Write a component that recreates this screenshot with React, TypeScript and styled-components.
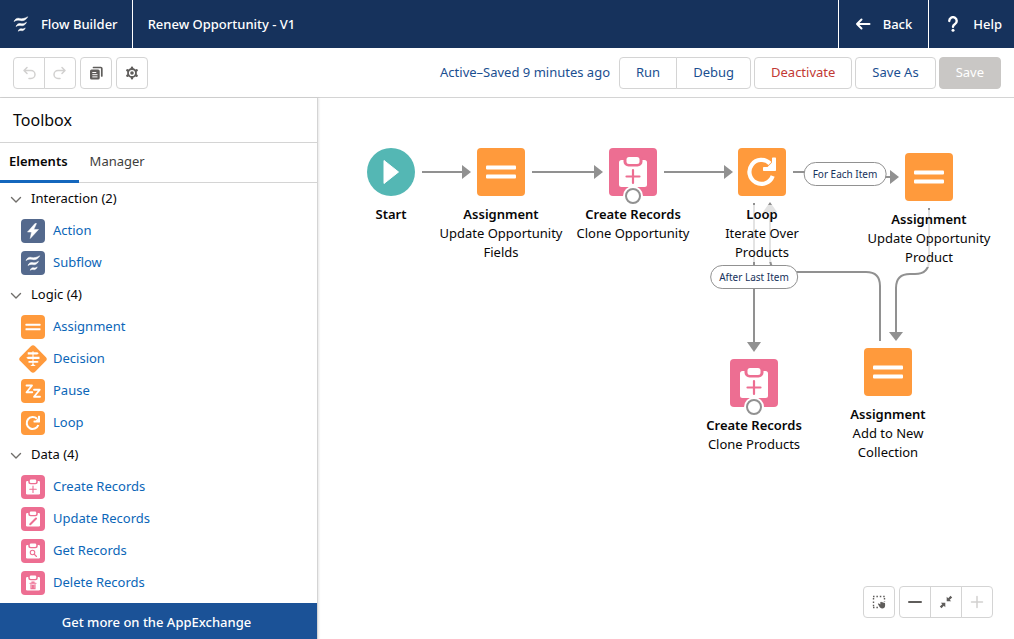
import React from "react";
import styled, { createGlobalStyle, css } from "styled-components";

const GlobalStyle = createGlobalStyle`
  *, *::before, *::after { box-sizing: border-box; }
  body {
    margin: 0;
    background: #fff;
    color: #080707;
    font-family: "Noto Sans", "Open Sans", sans-serif;
    font-size: 13px;
    line-height: 19px;
  }
  button { font: inherit; cursor: pointer; }
  a { text-decoration: none; }
  svg { display: block; flex: none; }
`;

const Page = styled.div`
  min-height: 100vh;
  display: flex;
  flex-direction: column;
`;

/* ---------- header ---------- */

const Header = styled.header`
  display: flex;
  height: 48px;
  background: #16325c;
  color: #fff;
  font-weight: 500;
`;

const Brand = styled.div`
  display: flex;
  align-items: center;
  gap: 12px;
  padding: 0 14px 0 13px;
  border-right: 1px solid #fff;
`;

const FlowTitle = styled.h1`
  flex: 1;
  margin: 0;
  padding-left: 15px;
  font-size: 13px;
  font-weight: 500;
  line-height: 48px;
`;

const HeaderLink = styled.a`
  display: flex;
  align-items: center;
  gap: 12px;
  padding: 0 16px;
  border-left: 1px solid #fff;
  color: #fff;

  &:last-child { padding-right: 12px; }
`;

/* ---------- toolbar ---------- */

const Toolbar = styled.div`
  display: flex;
  align-items: center;
  justify-content: space-between;
  height: 50px;
  padding: 0 13px;
  border-bottom: 1px solid #d4d4d4;
`;

const ToolbarSide = styled.div<{ $gap: number }>`
  display: flex;
  align-items: center;
  gap: ${(p) => p.$gap}px;
`;

const SaveStatus = styled.span`
  margin-right: 6px;
  color: #1b4f91;
`;

const ButtonGroup = styled.div`
  display: flex;

  & > button + button { margin-left: -1px; }
  & > button:not(:first-child) { border-top-left-radius: 0; border-bottom-left-radius: 0; }
  & > button:not(:last-child) { border-top-right-radius: 0; border-bottom-right-radius: 0; }
`;

const buttonBase = css`
  height: 32px;
  border: 1px solid #d4d4d4;
  border-radius: 4px;
  background: #fff;
`;

const IconButton = styled.button`
  ${buttonBase}
  display: grid;
  place-items: center;
  width: 32px;
  padding: 0;
  color: #5f5d5b;

  &:disabled { color: #d2d1d0; cursor: default; }
`;

const TextButton = styled.button<{ $tone?: "danger" }>`
  ${buttonBase}
  padding: 0 16px;
  color: ${(p) => (p.$tone === "danger" ? "#c23934" : "#1b4f91")};

  &:disabled {
    border-color: #c9c7c5;
    background: #c9c7c5;
    color: #fff;
    cursor: default;
  }
`;

/* ---------- sidebar ---------- */

const Body = styled.div`
  flex: 1;
  display: flex;
`;

const Sidebar = styled.aside`
  flex: none;
  display: flex;
  flex-direction: column;
  width: 318px;
  border-right: 1px solid #d4d4d4;
  box-shadow: 1px 0 2px rgba(0, 0, 0, 0.1);
`;

const SidebarTitle = styled.h2`
  margin: 0;
  padding: 0 13px;
  border-bottom: 1px solid #d4d4d4;
  font-size: 16px;
  font-weight: 400;
  line-height: 44px;
`;

const Tabs = styled.div`
  display: flex;
  gap: 2px;
  height: 40px;
  border-bottom: 1px solid #d4d4d4;
`;

const Tab = styled.button<{ $active?: boolean }>`
  height: 40px;
  padding: 0 11px 0 9px;
  border: 0;
  border-bottom: 3px solid ${(p) => (p.$active ? "#1467bd" : "transparent")};
  background: none;
  color: ${(p) => (p.$active ? "#080707" : "#3e3e3c")};
  font-weight: ${(p) => (p.$active ? 600 : 400)};
`;

const Tree = styled.nav`
  flex: 1;
  padding-bottom: 4px;
`;

const TreeText = styled.span`
  padding-bottom: 2px;
`;

const GroupButton = styled.button`
  display: flex;
  align-items: center;
  gap: 9px;
  width: 100%;
  height: 32px;
  padding: 0 10px;
  border: 0;
  background: none;
  color: #080707;
`;

const ItemList = styled.ul`
  margin: 0;
  padding: 0;
  list-style: none;
`;

const ItemLink = styled.a`
  display: flex;
  align-items: center;
  gap: 8px;
  height: 32px;
  padding-left: 21px;
  color: #0b66b8;
`;

const ExchangeButton = styled.a`
  display: block;
  background: #1b5297;
  color: #fff;
  font-weight: 500;
  line-height: 36px;
  padding: 1px 4px 0 0;
  text-align: center;
`;

/* ---------- canvas ---------- */

const Canvas = styled.main`
  position: relative;
  flex: 1;
  overflow: hidden;
`;

const Wires = styled.svg`
  position: absolute;
  inset: 0;
  width: 100%;
  height: 100%;
`;

const Node = styled.div<{ $x: number; $y: number }>`
  position: absolute;
  left: ${(p) => p.$x}px;
  top: ${(p) => p.$y}px;
  display: flex;
  flex-direction: column;
  align-items: center;
  gap: 9px;
  width: 126px;
  transform: translateX(-50%);
`;

const NodeIcon = styled.div`
  position: relative;
`;

const Port = styled.span`
  position: absolute;
  left: 14px;
  bottom: -10px;
  width: 20px;
  height: 20px;
  border: 2px solid #fff;
  border-radius: 50%;
  background: #fff;

  &::after {
    content: "";
    display: block;
    width: 16px;
    height: 16px;
    border: 2px solid #919191;
    border-radius: 50%;
  }
`;

const NodeText = styled.div`
  background: rgba(255, 255, 255, 0.75);
  text-align: center;
`;

const NodeType = styled.div`
  font-weight: 600;
`;

const Pill = styled.span<{ $x: number; $y: number }>`
  position: absolute;
  left: ${(p) => p.$x}px;
  top: ${(p) => p.$y}px;
  padding: 0 8px;
  border: 1px solid #919191;
  border-radius: 12px;
  background: #fff;
  color: #16325c;
  font-size: 10px;
  line-height: 22px;
  white-space: nowrap;
  transform: translate(-50%, -50%);
`;

const ZoomBar = styled.div`
  position: absolute;
  right: 21px;
  bottom: 22px;
  display: flex;
  gap: 4px;
`;

/* ---------- drawings ---------- */

type Kind =
  | "start" | "action" | "subflow" | "assignment" | "decision"
  | "pause" | "loop" | "create" | "update" | "get" | "delete";

const fills: Record<Kind, string> = {
  start: "#54b7b4",
  action: "#54698d",
  subflow: "#54698d",
  assignment: "#ff9a3c",
  decision: "#ff9a3c",
  pause: "#ff9a3c",
  loop: "#ff9a3c",
  create: "#ed6e92",
  update: "#ed6e92",
  get: "#ed6e92",
  delete: "#ed6e92",
};

const Waves = () => (
  <g fill="currentColor" stroke="currentColor" strokeWidth="1" strokeLinejoin="round">
    <path d="M10 19c2-5 6-7.500 11-6.200 5 1.300 9 .6 16.500-3.300-2.500 5.500-8 9-14.500 7.500-5-1.200-8.500-.8-13 2z" />
    <path d="M14 29c1.500-4.500 5-6.800 9-5.800 4 1 7 .3 12-2.700-2 5-6.500 7.800-11.500 6.700-3.700-.8-6.300-.4-9.500 1.800z" />
    <path d="M18.500 38.500c1-4 3.500-5.700 6.500-5 2.500.6 4.500.2 7.500-1.700-1.500 4.200-4.500 6.200-8 5.400-2.300-.5-4-.2-6 1.300z" />
  </g>
);

const Clipboard = ({ color, children }: { color: string; children: React.ReactNode }) => (
  <>
    <rect x="10" y="12" width="28" height="27" rx="2.500" fill="#fff" />
    <rect x="14.500" y="6.500" width="19" height="12" rx="5" fill={color} />
    <rect x="17.500" y="9" width="13" height="7" rx="2.500" fill="#fff" />
    <g fill="none" stroke={color} strokeWidth="2.200" strokeLinecap="round">{children}</g>
  </>
);

function Glyph({ kind }: { kind: Kind }) {
  const color = fills[kind];
  switch (kind) {
    case "start":
      return <path d="M17 12.500v23L31.500 24z" fill="#fff" stroke="#fff" strokeLinejoin="round" />;
    case "action":
      return <path d="M28 9 13 26h8l-2.500 13L35 21h-9.500L31 9z" fill="#fff" stroke="#fff" strokeLinejoin="round" />;
    case "subflow":
      return <Waves />;
    case "assignment":
      return (
        <g fill="#fff">
          <rect x="9" y="17.500" width="30" height="4" rx="1" />
          <rect x="9" y="26.500" width="30" height="4" rx="1" />
        </g>
      );
    case "decision":
      return (
        <g fill="#fff">
          <rect x="23" y="8.500" width="2" height="26" />
          <path d="M13.500 10.500h19l3 2.200-3 2.200h-19z" />
          <path d="M37 19.500H14l-3.500 2.200 3.500 2.200h23z" />
          <path d="M15 28h18l2.500 1.800L33 31.600H15z" />
          <path d="M18.500 38l5.500-4.500 5.500 4.500z" />
        </g>
      );
    case "pause":
      return (
        <g fill="none" stroke="#fff" strokeWidth="3.600" strokeLinejoin="round" strokeLinecap="round">
          <path d="M11 13h11L11 26.500h11.500" />
          <path d="M26 21.500h11.500L26 35.500h12" />
        </g>
      );
    case "loop":
      return (
        <>
          <path d="M34.700 28A12 12 0 1 1 32 15.500" fill="none" stroke="#fff" strokeWidth="4.200" />
          <path d="M34 10.500c0-.6.500-1 1-1h2c.6 0 1 .4 1 1v11.500c0 .6-.4 1-1 1H26c-.6 0-1-.4-1-1V20c0-.6.400-1 1-1h3.500L34 14.500z" fill="#fff" />
        </>
      );
    case "create":
      return <Clipboard color={color}><path d="M24 22v13M17.500 28.500h13" /></Clipboard>;
    case "update":
      return <Clipboard color={color}><path d="M18.500 34.500 30 23" strokeWidth="4" /></Clipboard>;
    case "get":
      return (
        <Clipboard color={color}>
          <circle cx="23" cy="27" r="4.500" />
          <path d="M26.500 30.500 31 35" />
        </Clipboard>
      );
    case "delete":
      return (
        <Clipboard color={color}>
          <path d="M18 24.500h12M22 24v-2h4v2M20 27v8.500h8V27M22.800 28v6M25.300 28v6" />
        </Clipboard>
      );
  }
}

function ElementIcon({ kind, size }: { kind: Kind; size: number }) {
  const radius = size > 30 ? 4 : 8;
  return (
    <svg width={size} height={size} viewBox="0 0 48 48" color="#fff" overflow="visible" aria-hidden="true">
      {kind === "start" ? (
        <circle cx="24" cy="24" r="24" fill={fills[kind]} />
      ) : kind === "decision" ? (
        <rect x="3" y="3" width="42" height="42" rx="6" fill={fills[kind]} transform="rotate(45 24 24)" />
      ) : (
        <rect width="48" height="48" rx={radius} fill={fills[kind]} />
      )}
      <Glyph kind={kind} />
    </svg>
  );
}

const Chevron = () => (
  <svg width="12" height="12" viewBox="0 0 12 12" fill="none" stroke="#706e6b" strokeWidth="1.400" strokeLinecap="round" strokeLinejoin="round">
    <path d="M1.500 4.500 6 9l4.500-4.500" />
  </svg>
);

const UndoIcon = ({ flip }: { flip?: boolean }) => (
  <svg width="14" height="14" viewBox="0 0 14 14" fill="none" stroke="currentColor" strokeWidth="1.500" strokeLinecap="round" strokeLinejoin="round">
    <g transform={flip ? "matrix(-1 0 0 1 14 0)" : undefined}>
      <path d="M5 1.500 2 4.500l3 3M2.300 4.500H9a4 4 0 0 1 0 8H7" />
    </g>
  </svg>
);

const CopyIcon = () => (
  <svg width="14" height="14" viewBox="0 0 14 14">
    <path d="M4.500 1.500h7.300a1 1 0 0 1 1 1V10" fill="none" stroke="currentColor" strokeWidth="1.700" strokeLinecap="round" />
    <rect x="1" y="3.500" width="9.700" height="10" rx="1.500" fill="currentColor" />
    <path d="M3.300 6.500h4M3.300 8.700h5.200M3.300 10.900h5.200" stroke="#fff" strokeWidth="1" />
  </svg>
);

const GearIcon = () => (
  <svg width="14" height="14" viewBox="0 0 14 14" fill="none" stroke="currentColor">
    <circle cx="7" cy="7" r="4" strokeWidth="1.800" />
    <circle cx="7" cy="7" r="1.800" fill="currentColor" stroke="none" />
    <path d="M7 1.800v.8M7 11.400v.8M2.300 4.300l.8.500M10.900 9.200l.8.500M2.300 9.700l.8-.5M10.900 4.800l.8-.5" strokeWidth="2.400" strokeLinecap="round" />
  </svg>
);

const BackIcon = () => (
  <svg width="16" height="16" viewBox="0 0 16 16" fill="none" stroke="currentColor" strokeWidth="2" strokeLinecap="round" strokeLinejoin="round">
    <path d="M14.500 8H2M6.500 3.500 2 8l4.500 4.500" />
  </svg>
);

const HelpIcon = () => (
  <svg width="16" height="16" viewBox="0 0 16 16" fill="none" stroke="currentColor" strokeWidth="2.400" strokeLinecap="round" strokeLinejoin="round">
    <path d="M4.300 5a3.700 3.700 0 1 1 5.700 3C8.600 8.900 8 9.400 8 10.700" />
    <circle cx="8" cy="14.300" r="1.500" fill="currentColor" stroke="none" />
  </svg>
);

const SelectIcon = () => (
  <svg width="14" height="14" viewBox="0 0 14 14" fill="currentColor">
    <path d="M1 1.500h12M1.500 3v10M12.500 3v4M1 12.500h5" fill="none" stroke="currentColor" strokeWidth="1.400" strokeDasharray="1.500 1.900" />
    <path d="M5.800 8.800c.6-.6 1.400-.5 2 .1l.5.500V7.500c0-1 1.400-1 1.500-.2 1-.3 1.600 0 1.800.4 1-.1 1.500.4 1.500 1.200v1.600c0 1.800-1.100 3-2.900 3-1.500 0-2.300-.8-2.900-1.900z" />
  </svg>
);

const ShrinkIcon = () => (
  <svg width="14" height="14" viewBox="0 0 14 14" fill="currentColor">
    <path d="M7.700 1.800v4.500h4.500l-1.500-1.500 2.500-2.300-1.700-1.700-2.300 2.500zM6.300 12.200V7.700H1.800l1.500 1.500L.8 11.500l1.700 1.700 2.300-2.500z" />
  </svg>
);

const MinusIcon = () => (
  <svg width="14" height="14" viewBox="0 0 14 14"><rect x="0" y="6" width="14" height="2" rx="1" fill="currentColor" /></svg>
);

const PlusIcon = () => (
  <svg width="14" height="14" viewBox="0 0 14 14" stroke="currentColor" strokeWidth="1.500" strokeLinecap="round"><path d="M7 1.500v11M1.500 7h11" /></svg>
);

/* ---------- data ---------- */

const groups: { name: string; items: { kind: Kind; label: string }[] }[] = [
  { name: "Interaction", items: [{ kind: "action", label: "Action" }, { kind: "subflow", label: "Subflow" }] },
  {
    name: "Logic",
    items: [
      { kind: "assignment", label: "Assignment" },
      { kind: "decision", label: "Decision" },
      { kind: "pause", label: "Pause" },
      { kind: "loop", label: "Loop" },
    ],
  },
  {
    name: "Data",
    items: [
      { kind: "create", label: "Create Records" },
      { kind: "update", label: "Update Records" },
      { kind: "get", label: "Get Records" },
      { kind: "delete", label: "Delete Records" },
    ],
  },
];

const nodes: { kind: Kind; x: number; y: number; type: string; label?: string }[] = [
  { kind: "start", x: 73, y: 50, type: "Start" },
  { kind: "assignment", x: 183, y: 50, type: "Assignment", label: "Update Opportunity Fields" },
  { kind: "create", x: 315, y: 50, type: "Create Records", label: "Clone Opportunity" },
  { kind: "loop", x: 444, y: 50, type: "Loop", label: "Iterate Over Products" },
  { kind: "assignment", x: 611, y: 55, type: "Assignment", label: "Update Opportunity Product" },
  { kind: "create", x: 436, y: 261, type: "Create Records", label: "Clone Products" },
  { kind: "assignment", x: 570, y: 250, type: "Assignment", label: "Add to New Collection" },
];

const wires = [
  "M104 74H146",
  "M214 74H278",
  "M346 74H408",
  "M475 74H510C540 74 540 79 564 79H574",
  "M436 105V246",
  "M562 243V188Q562 174 548 174H466Q452 174 452 160V105",
  "M611 110V162Q611 176 597 176H592Q578 176 578 190V236",
];

const arrowHeads = [
  "M144 67v14l9-7z",
  "M276 67v14l9-7z",
  "M406 67v14l9-7z",
  "M572 72v14l9-7z",
  "M429 244h14l-7 10z",
  "M571 234h14l-7 9z",
  "M445 114h14l-7-10z",
];

export default function App() {
  return (
    <Page>
      <GlobalStyle />
      <Header>
        <Brand>
          <svg width="16" height="16" viewBox="8 8 32 32" aria-hidden="true"><Waves /></svg>
          Flow Builder
        </Brand>
        <FlowTitle>Renew Opportunity - V1</FlowTitle>
        <HeaderLink href="#back"><BackIcon />Back</HeaderLink>
        <HeaderLink href="#help"><HelpIcon />Help</HeaderLink>
      </Header>

      <Toolbar>
        <ToolbarSide $gap={4}>
          <ButtonGroup>
            <IconButton disabled aria-label="Undo"><UndoIcon /></IconButton>
            <IconButton disabled aria-label="Redo"><UndoIcon flip /></IconButton>
          </ButtonGroup>
          <IconButton aria-label="Copy elements"><CopyIcon /></IconButton>
          <IconButton aria-label="Flow settings"><GearIcon /></IconButton>
        </ToolbarSide>
        <ToolbarSide $gap={3}>
          <SaveStatus>Active–Saved 9 minutes ago</SaveStatus>
          <ButtonGroup>
            <TextButton>Run</TextButton>
            <TextButton>Debug</TextButton>
          </ButtonGroup>
          <TextButton $tone="danger">Deactivate</TextButton>
          <TextButton>Save As</TextButton>
          <TextButton disabled>Save</TextButton>
        </ToolbarSide>
      </Toolbar>

      <Body>
        <Sidebar>
          <SidebarTitle>Toolbox</SidebarTitle>
          <Tabs role="tablist">
            <Tab role="tab" aria-selected="true" $active>Elements</Tab>
            <Tab role="tab" aria-selected="false">Manager</Tab>
          </Tabs>
          <Tree>
            {groups.map((group) => (
              <section key={group.name}>
                <GroupButton aria-expanded="true">
                  <Chevron />
                  <TreeText>{`${group.name} (${group.items.length})`}</TreeText>
                </GroupButton>
                <ItemList>
                  {group.items.map((item) => (
                    <li key={item.kind}>
                      <ItemLink href={`#${item.kind}`}>
                        <ElementIcon kind={item.kind} size={24} />
                        <TreeText>{item.label}</TreeText>
                      </ItemLink>
                    </li>
                  ))}
                </ItemList>
              </section>
            ))}
          </Tree>
          <ExchangeButton href="#appexchange">Get more on the AppExchange</ExchangeButton>
        </Sidebar>

        <Canvas>
          <Wires aria-hidden="true">
            <g fill="none" stroke="#919191" strokeWidth="2">
              {wires.map((d) => <path key={d} d={d} />)}
            </g>
            <g fill="#919191">
              {arrowHeads.map((d) => <path key={d} d={d} />)}
            </g>
          </Wires>
          {nodes.map((node) => (
            <Node key={`${node.x}-${node.y}`} $x={node.x} $y={node.y}>
              <NodeIcon>
                <ElementIcon kind={node.kind} size={48} />
                {node.kind === "create" && <Port />}
              </NodeIcon>
              <NodeText>
                <NodeType>{node.type}</NodeType>
                {node.label}
              </NodeText>
            </Node>
          ))}
          <Pill $x={527} $y={76}>For Each Item</Pill>
          <Pill $x={436} $y={179}>After Last Item</Pill>
          <ZoomBar>
            <IconButton aria-label="Select elements"><SelectIcon /></IconButton>
            <ButtonGroup>
              <IconButton aria-label="Zoom out"><MinusIcon /></IconButton>
              <IconButton aria-label="Zoom to fit"><ShrinkIcon /></IconButton>
              <IconButton disabled aria-label="Zoom in"><PlusIcon /></IconButton>
            </ButtonGroup>
          </ZoomBar>
        </Canvas>
      </Body>
    </Page>
  );
}
